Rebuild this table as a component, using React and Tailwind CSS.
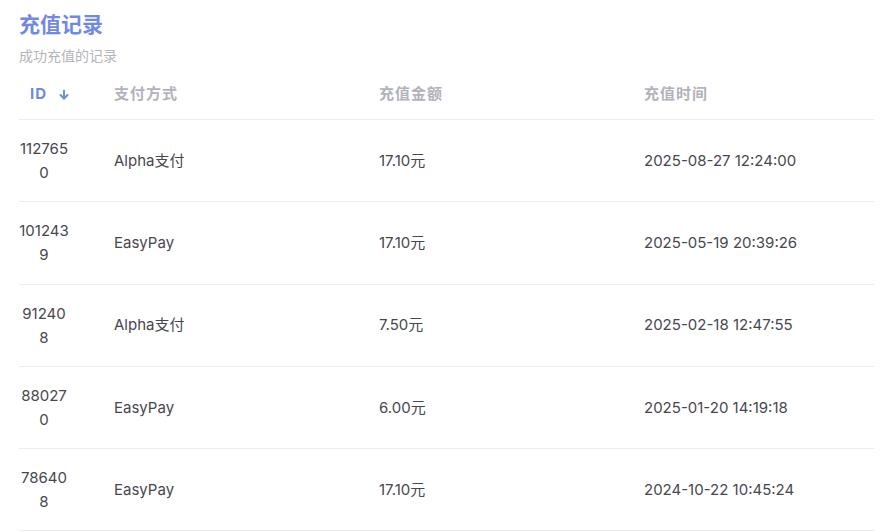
const rows = [
  { id: '1127650', method: 'Alpha支付', amount: '17.10元', time: '2025-08-27 12:24:00' },
  { id: '1012439', method: 'EasyPay', amount: '17.10元', time: '2025-05-19 20:39:26' },
  { id: '912408', method: 'Alpha支付', amount: '7.50元', time: '2025-02-18 12:47:55' },
  { id: '880270', method: 'EasyPay', amount: '6.00元', time: '2025-01-20 14:19:18' },
  { id: '786408', method: 'EasyPay', amount: '17.10元', time: '2024-10-22 10:45:24' },
]

function ArrowDown() {
  return (
    <svg width="10" height="11" viewBox="0 0 10 11" fill="none" stroke="currentColor" strokeWidth="2" strokeLinecap="round" strokeLinejoin="round">
      <path d="M5 1.5v8" /><path d="M1.5 6 5 9.5 8.5 6" />
    </svg>
  )
}

export default function App() {
  return (
    <div className="min-h-screen bg-white font-['Inter','Noto_Sans_CJK_SC',sans-serif] px-[19px] pt-[12px]">
      <h1 className="text-[21px] leading-[26px] font-bold text-[#7289e4]">充值记录</h1>
      <p className="text-[14px] leading-[20px] mt-[8px] text-[#b4b4b9]">成功充值的记录</p>

      <div className="w-[855px] mt-[8px]">
        <div className="grid grid-cols-[95px_265px_265px_1fr] h-[46px] pb-[4px] items-center border-b border-[#ececf0] text-[15px] font-bold tracking-[1px] text-[#b2b2ba]">
          <div className="flex items-center gap-[12px] pl-[11px] text-[#7289e4]">
            <span>ID</span>
            <ArrowDown />
          </div>
          <div>支付方式</div>
          <div>充值金额</div>
          <div>充值时间</div>
        </div>

        {rows.map((r) => (
          <div key={r.id} className="grid grid-cols-[95px_265px_265px_1fr] h-[82.3px] pt-[1px] items-center border-b border-[#ececf0] text-[15px] text-[#47474f]">
            <div className="w-[50px] text-center break-all leading-[24px]">{r.id}</div>
            <div>{r.method}</div>
            <div>{r.amount}</div>
            <div>{r.time}</div>
          </div>
        ))}
      </div>
    </div>
  )
}
